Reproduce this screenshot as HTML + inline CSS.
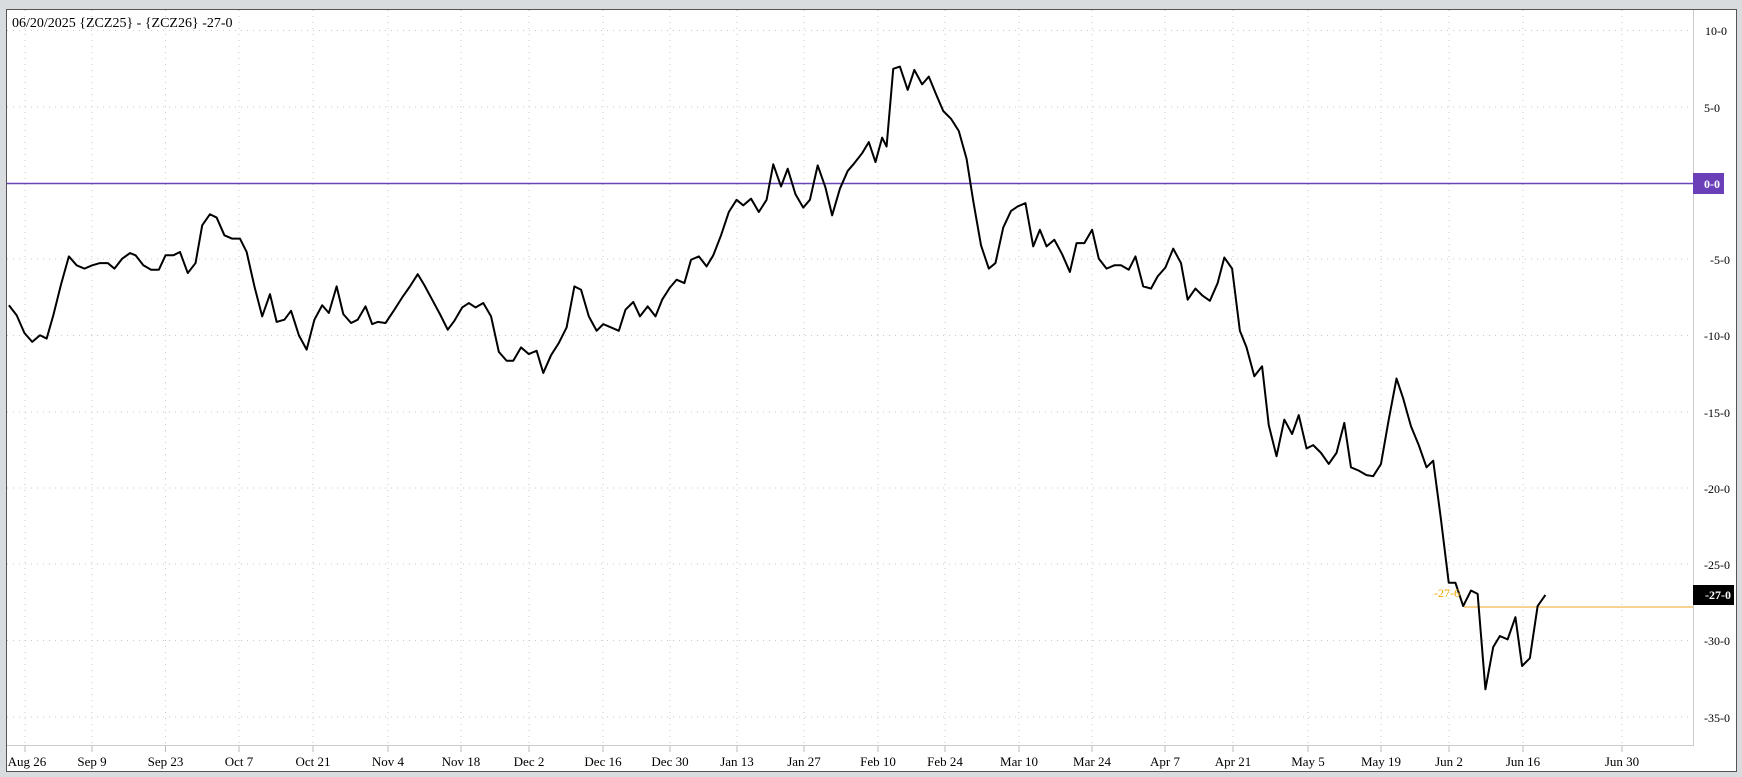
<!DOCTYPE html>
<html><head><meta charset="utf-8"><style>
html,body{margin:0;padding:0;background:#d9dcdf;}
svg{display:block;font-family:"Liberation Serif",serif;}
</style></head><body>
<svg width="1742" height="777" viewBox="0 0 1742 777" xmlns="http://www.w3.org/2000/svg">
<rect x="0" y="0" width="1742" height="777" fill="#d9dcdf"/>
<rect x="6.5" y="9.5" width="1730" height="762" fill="#fff" stroke="#555" stroke-width="1"/>
<g stroke="#c8c8c8" stroke-width="1" stroke-dasharray="1,5">
<line x1="7" x2="1693" y1="30.5" y2="30.5"/><line x1="7" x2="1693" y1="107" y2="107"/>
<line x1="7" x2="1693" y1="259" y2="259"/><line x1="7" x2="1693" y1="335.5" y2="335.5"/>
<line x1="7" x2="1693" y1="412" y2="412"/><line x1="7" x2="1693" y1="488" y2="488"/>
<line x1="7" x2="1693" y1="564" y2="564"/><line x1="7" x2="1693" y1="640.5" y2="640.5"/>
<line x1="7" x2="1693" y1="717" y2="717"/>
<line x1="25" x2="25" y1="10" y2="745"/><line x1="92" x2="92" y1="10" y2="745"/><line x1="165.5" x2="165.5" y1="10" y2="745"/><line x1="239" x2="239" y1="10" y2="745"/><line x1="313" x2="313" y1="10" y2="745"/><line x1="388" x2="388" y1="10" y2="745"/><line x1="461" x2="461" y1="10" y2="745"/><line x1="529" x2="529" y1="10" y2="745"/><line x1="603" x2="603" y1="10" y2="745"/><line x1="670" x2="670" y1="10" y2="745"/><line x1="737" x2="737" y1="10" y2="745"/><line x1="804" x2="804" y1="10" y2="745"/><line x1="878" x2="878" y1="10" y2="745"/><line x1="945" x2="945" y1="10" y2="745"/><line x1="1019" x2="1019" y1="10" y2="745"/><line x1="1092" x2="1092" y1="10" y2="745"/><line x1="1165" x2="1165" y1="10" y2="745"/><line x1="1233" x2="1233" y1="10" y2="745"/><line x1="1308" x2="1308" y1="10" y2="745"/><line x1="1381" x2="1381" y1="10" y2="745"/><line x1="1449" x2="1449" y1="10" y2="745"/><line x1="1523" x2="1523" y1="10" y2="745"/><line x1="1622" x2="1622" y1="10" y2="745"/>
</g>
<line x1="1693.5" x2="1693.5" y1="10" y2="746" stroke="#ccc"/>
<line x1="7" x2="1694" y1="745.5" y2="745.5" stroke="#ccc"/>
<g stroke="#bbb"><line x1="25" x2="25" y1="746" y2="752"/><line x1="92" x2="92" y1="746" y2="752"/><line x1="165.5" x2="165.5" y1="746" y2="752"/><line x1="239" x2="239" y1="746" y2="752"/><line x1="313" x2="313" y1="746" y2="752"/><line x1="388" x2="388" y1="746" y2="752"/><line x1="461" x2="461" y1="746" y2="752"/><line x1="529" x2="529" y1="746" y2="752"/><line x1="603" x2="603" y1="746" y2="752"/><line x1="670" x2="670" y1="746" y2="752"/><line x1="737" x2="737" y1="746" y2="752"/><line x1="804" x2="804" y1="746" y2="752"/><line x1="878" x2="878" y1="746" y2="752"/><line x1="945" x2="945" y1="746" y2="752"/><line x1="1019" x2="1019" y1="746" y2="752"/><line x1="1092" x2="1092" y1="746" y2="752"/><line x1="1165" x2="1165" y1="746" y2="752"/><line x1="1233" x2="1233" y1="746" y2="752"/><line x1="1308" x2="1308" y1="746" y2="752"/><line x1="1381" x2="1381" y1="746" y2="752"/><line x1="1449" x2="1449" y1="746" y2="752"/><line x1="1523" x2="1523" y1="746" y2="752"/><line x1="1622" x2="1622" y1="746" y2="752"/></g>
<line x1="7" x2="1693" y1="183.5" y2="183.5" stroke="#6a45b8" stroke-width="1.5"/>
<line x1="1464" x2="1693" y1="607" y2="607" stroke="#f7c46a" stroke-width="1.5"/>
<g transform="scale(1.1110,1.1100)">
<polyline fill="none" stroke="#000" stroke-width="1.8" stroke-linejoin="round" points="8,275 15,284 22,300 29,308 36,302 42,305 48,284 55,256 62,231 69,239 76,242 83,239 90,237 97,237 103,242 110,233 117,228 122,230 129,239 136,243 143,243 149,230 156,230 162,227 169,246 176,237 182,203 189,193 195,196 202,212 209,215 216,215 222,227 229,258 236,285 243,265 249,290 256,288 262,280 269,302 276,315 283,288 290,275 296,282 303,258 309,283 316,291 322,288 329,276 335,292 340,290 347,291 355,279 362,268 369,258 376,247 382,257 389,270 396,283 403,297 409,289 416,277 422,273 428,277 435,273 442,285 449,317 456,325 462,325 469,313 476,319 483,316 489,336 496,320 503,309 510,295 517,258 523,261 530,285 537,298 543,292 550,295 557,298 563,279 570,272 576,285 583,276 590,285 596,270 603,259 609,252 616,255 622,234 629,231 636,240 642,230 649,212 656,191 663,180 669,185 676,179 683,191 690,180 696,148 703,168 709,152 716,175 723,187 729,180 736,149 743,169 749,194 756,170 763,154 769,147 776,138 782,128 788,146 794,124 798,132 804,62 810,60 817,81 823,63 830,76 836,69 843,86 849,100 856,107 863,118 870,143 876,181 883,221 890,242 896,237 903,205 910,190 916,186 923,183 930,222 936,207 942,222 949,216 956,229 963,245 969,219 976,219 983,207 989,233 996,242 1003,239 1009,239 1016,243 1022,231 1029,258 1036,260 1042,249 1049,241 1056,224 1063,237 1069,270 1076,260 1082,266 1089,271 1096,255 1102,232 1109,242 1116,298 1122,313 1129,339 1136,330 1142,383 1149,411 1156,378 1163,391 1169,374 1176,404 1182,401 1189,408 1196,418 1203,408 1210,381 1216,421 1223,424 1230,428 1236,429 1243,418 1250,378 1257,341 1263,359 1270,384 1277,401 1284,421 1290,415 1297,468 1304,525 1310,525 1317,546 1324,532 1330,535 1337,621 1344,583 1350,573 1357,576 1364,556 1370,600 1377,593 1384,546 1391,536"/>
</g>
<text x="12" y="27" font-size="14" fill="#000">06/20/2025 {ZCZ25} - {ZCZ26} -27-0</text>
<g font-size="12" fill="#000" text-anchor="end">
<text x="1727" y="35">10-0</text><text x="1720" y="112">5-0</text>
<text x="1730" y="264">-5-0</text><text x="1730" y="340">-10-0</text>
<text x="1730" y="417">-15-0</text><text x="1730" y="493">-20-0</text>
<text x="1730" y="569">-25-0</text><text x="1730" y="645">-30-0</text>
<text x="1730" y="722">-35-0</text>
</g>
<rect x="1693" y="173" width="31" height="21" fill="#6a3fb8"/>
<text x="1720" y="188" font-size="12" font-weight="bold" fill="#fff" text-anchor="end">0-0</text>
<rect x="1693" y="585" width="41" height="20" fill="#000"/>
<text x="1731" y="599" font-size="12" font-weight="bold" fill="#fff" text-anchor="end">-27-0</text>
<text x="1434" y="597" font-size="12" fill="#f0a500">-27-6</text>
<g font-size="13" fill="#000" text-anchor="middle">
<text x="27" y="766">Aug 26</text><text x="92" y="766">Sep 9</text><text x="165.5" y="766">Sep 23</text><text x="239" y="766">Oct 7</text><text x="313" y="766">Oct 21</text><text x="388" y="766">Nov 4</text><text x="461" y="766">Nov 18</text><text x="529" y="766">Dec 2</text><text x="603" y="766">Dec 16</text><text x="670" y="766">Dec 30</text><text x="737" y="766">Jan 13</text><text x="804" y="766">Jan 27</text><text x="878" y="766">Feb 10</text><text x="945" y="766">Feb 24</text><text x="1019" y="766">Mar 10</text><text x="1092" y="766">Mar 24</text><text x="1165" y="766">Apr 7</text><text x="1233" y="766">Apr 21</text><text x="1308" y="766">May 5</text><text x="1381" y="766">May 19</text><text x="1449" y="766">Jun 2</text><text x="1523" y="766">Jun 16</text><text x="1622" y="766">Jun 30</text>
</g>
</svg>
</body></html>
